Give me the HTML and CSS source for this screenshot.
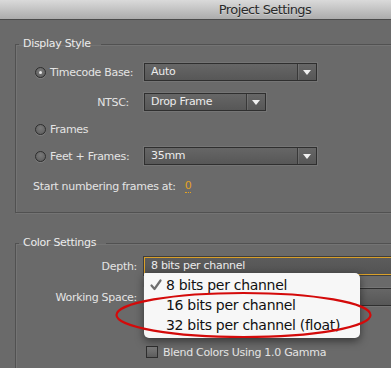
FILE: index.html
```html
<!DOCTYPE html>
<html>
<head>
<meta charset="utf-8">
<link rel="stylesheet" href="styles.css">
</head>
<body>
<div class="window">
  <div class="titlebar"><span class="title">Project Settings</span></div>
  <div class="content">
    <fieldset class="group display">
      <legend>Display Style</legend>
      <div class="row">
        <label class="lbl"><span class="radio on"></span>Timecode Base:</label>
        <div class="select wide"><span class="val">Auto</span><span class="btn"><i class="arrow"></i></span></div>
      </div>
      <div class="row gap12">
        <label class="lbl right">NTSC:</label>
        <div class="select narrow"><span class="val">Drop Frame</span><span class="btn"><i class="arrow"></i></span></div>
      </div>
      <div class="row gap9">
        <label class="lbl"><span class="radio"></span>Frames</label>
      </div>
      <div class="row gap9">
        <label class="lbl"><span class="radio"></span>Feet + Frames:</label>
        <div class="select wide"><span class="val">35mm</span><span class="btn"><i class="arrow"></i></span></div>
      </div>
      <div class="row gap12 start">
        <span class="plain">Start numbering frames at:</span><span class="num">0</span>
      </div>
    </fieldset>

    <fieldset class="group color">
      <legend>Color Settings</legend>
      <div class="row">
        <label class="clbl">Depth:</label>
        <div class="select long focus"><span class="val">8 bits per channel</span></div>
      </div>
      <div class="row gap13">
        <label class="clbl">Working Space:</label>
        <div class="select long"><span class="val"></span></div>
      </div>
      <div class="row gap37 check-row">
        <span class="check"></span><span class="plain">Blend Colors Using 1.0 Gamma</span>
      </div>
    </fieldset>
  </div>

  <div class="menu">
    <div class="item"><svg class="tick" width="14" height="14" viewBox="0 0 14 14"><path d="M2.5 7.5 L5.5 11 L11.5 2.5" fill="none" stroke="#6e6e6e" stroke-width="2.2" stroke-linecap="round" stroke-linejoin="round"/></svg>8 bits per channel</div>
    <div class="item">16 bits per channel</div>
    <div class="item">32 bits per channel (float)</div>
  </div>

  <svg class="annot" width="391" height="368" viewBox="0 0 391 368">
    <ellipse cx="243.5" cy="315" rx="127" ry="22" fill="none" stroke="#d40a0a" stroke-width="2.2"/>
  </svg>
</div>
</body>
</html>
```

FILE: styles.css
```css
html, body {
  margin: 0;
  padding: 0;
}
body {
  width: 391px;
  height: 368px;
  overflow: hidden;
  background: #6a6a6a;
  font-family: "DejaVu Sans", "Liberation Sans", sans-serif;
  font-size: 11px;
  letter-spacing: -0.3px;
  color: #e4e4e4;
}
.window {
  position: relative;
  width: 530px;
  height: 368px;
  overflow: hidden;
}
.titlebar {
  height: 19px;
  border-bottom: 1px solid #4b4b4b;
  background: linear-gradient(#dadada, #acacac);
  text-align: center;
  line-height: 20px;
}
.title {
  font-size: 13px;
  letter-spacing: -0.6px;
  color: #2a2a2a;
  text-shadow: 0 1px 0 rgba(255,255,255,0.35);
}
.content {
  padding: 17px 0 0 15px;
}
.group {
  margin: 0;
  padding: 12px 0 17px 3px;
  border: 1px solid #515151;
  box-shadow: inset 1px 1px 0 rgba(255,255,255,0.07), 1px 1px 0 rgba(255,255,255,0.07);
  min-width: 0;
}
.group legend {
  padding: 0 10px 0 4px;
  line-height: 14px;
  color: #ececec;
}
.color {
  margin-top: 23px;
  padding-top: 7px;
  padding-bottom: 40px;
}
.row {
  display: flex;
  align-items: center;
  height: 18px;
  padding-left: 16px;
}
.color .row { padding-left: 0; }
.gap9 { margin-top: 9px; }
.gap12 { margin-top: 12px; }
.gap13 { margin-top: 13px; }
.gap37 { margin-top: 37px; }
.lbl {
  width: 109px;
  flex: none;
  display: flex;
  align-items: center;
  white-space: nowrap;
}
.lbl.right {
  justify-content: flex-end;
  padding-right: 15px;
  box-sizing: border-box;
}
.clbl {
  width: 125px;
  flex: none;
  box-sizing: border-box;
  padding-right: 7px;
  text-align: right;
  white-space: nowrap;
}
.radio {
  width: 9px;
  height: 9px;
  border-radius: 50%;
  border: 1px solid #2e2e2e;
  background: radial-gradient(circle at 50% 35%, #7a7a7a, #5a5a5a);
  box-shadow: 0 1px 0 rgba(255,255,255,0.12);
  margin-right: 4px;
  flex: none;
  display: flex;
  align-items: center;
  justify-content: center;
}
.radio.on::after {
  content: "";
  width: 3px;
  height: 3px;
  border-radius: 50%;
  background: #e8e8e8;
}
.select {
  display: flex;
  align-items: stretch;
  height: 16px;
  border: 1px solid #2f2f2f;
  box-shadow: 0 0 0 1px rgba(255,255,255,0.08);
  background: linear-gradient(#666, #575757);
  box-sizing: content-box;
}
.select.wide { width: 171px; }
.select.narrow { width: 120px; }
.select.long { width: 320px; }
.select.focus {
  border-color: #d9a02a;
  background: linear-gradient(#5c5c5c, #535353);
  box-shadow: 0 0 0 1px #3e3e3e;
}
.val {
  flex: 1;
  padding-left: 6px;
  line-height: 16px;
  color: #ececec;
  white-space: nowrap;
}
.btn {
  width: 18px;
  flex: none;
  border-left: 1px solid #383838;
  box-shadow: inset 1px 0 0 rgba(255,255,255,0.1);
  display: flex;
  align-items: center;
  justify-content: center;
}
.arrow {
  width: 0;
  height: 0;
  border-left: 4px solid transparent;
  border-right: 4px solid transparent;
  border-top: 5px solid #efefef;
}
.start {
  padding-left: 14px;
}
.num {
  margin-left: 9px;
  color: #e3a322;
  border-bottom: 1px dotted #e3a322;
  line-height: 13px;
}
.color .check-row { padding-left: 127px; }
.check {
  width: 10px;
  height: 10px;
  border: 1px solid #2e2e2e;
  background: linear-gradient(#7a7a7a, #5c5c5c);
  margin-right: 5px;
  flex: none;
}
.plain { white-space: nowrap; }

.menu {
  position: absolute;
  left: 144px;
  top: 273px;
  width: 216px;
  height: 65px;
  box-sizing: border-box;
  padding-top: 2px;
  background: #f7f7f7;
  border-radius: 1px 5px 5px 5px;
  box-shadow: 0 3px 9px rgba(0,0,0,0.5);
  font-size: 14px;
  letter-spacing: -0.3px;
  color: #111;
}
.item {
  position: relative;
  height: 20px;
  line-height: 20px;
  padding-left: 22px;
  white-space: nowrap;
}
.tick {
  position: absolute;
  left: 5px;
  top: 3px;
}
.annot {
  position: absolute;
  left: 0;
  top: 0;
  pointer-events: none;
}
```
